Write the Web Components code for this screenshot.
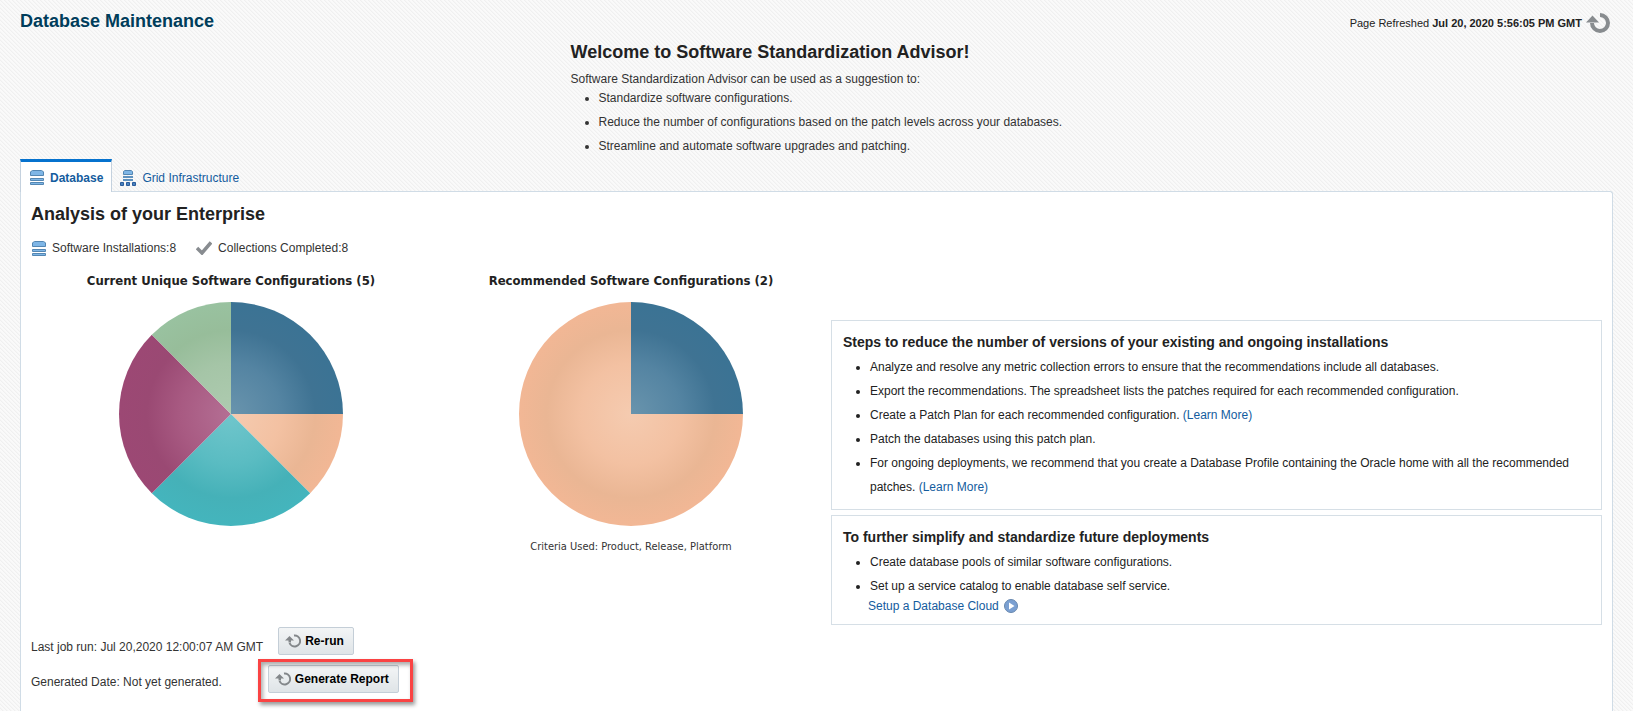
<!DOCTYPE html>
<html lang="en">
<head>
<meta charset="utf-8">
<title>Database Maintenance</title>
<style>
  body {
    margin: 0;
    font: 12px/16px "Liberation Sans", Arial, sans-serif;
    color: #333;
    background: #fafafa url("data:image/svg+xml,%3Csvg xmlns='http://www.w3.org/2000/svg' width='4' height='4' shape-rendering='crispEdges'%3E%3Cpath fill='%23f0f0f0' d='M0 0h1v1H0zM1 1h1v1H1zM2 2h1v1H2zM3 3h1v1H3z'/%3E%3Cpath fill='%23f6f6f6' d='M1 0h1v1H1zM2 1h1v1H2zM3 2h1v1H3zM0 3h1v1H0z'/%3E%3C/svg%3E");
  }
</style>
</head>
<body>
<maintenance-page></maintenance-page>

<script>
// Registers an element whose shadow root is filled from the markup that render(element) returns.
const define = (name, render) => customElements.define(name, class extends HTMLElement {
  constructor() {
    super();
    this.attachShadow({ mode: "open" });
  }
  connectedCallback() {
    const t = document.createElement("template");
    t.innerHTML = render(this);
    this.shadowRoot.replaceChildren(t.content.cloneNode(true));
  }
});

const ICONS = {
  database: [14, 15, `
    <path d="M.5 5.500V1.800L2.500.500H11.500L13.500 1.800V5.500Z" fill="#7fb6e6" stroke="#5487b3"/>
    <path d="M.5 8.500H13.500V10.500H.5ZM.5 12.500H13.500V14.500H.5Z" fill="#7fb6e6" stroke="#5487b3"/>`],
  grid: [16, 16, `
    <path d="M3.500 4.500V1.500L4.800.500H11.200L12.500 1.500V4.500Z" fill="#7fb6e6" stroke="#5487b3"/>
    <path d="M3 7H13M3 10H13" stroke="#5f92bf" stroke-width="2"/>
    <path d="M.5 12.500H3.500V15.500H.5ZM6.500 12.500H9.500V15.500H6.500ZM12.500 12.500H15.500V15.500H12.500Z" fill="#4a82bd" stroke="#2a5c9c"/>`],
  check: [16, 14, `<path d="M1 7L6 12L15 1.500" fill="none" stroke="#888c90" stroke-width="3.500"/>`],
  refresh: [24, 20, `
    <path d="M14 2A8 8 0 1 1 6 10" fill="none" stroke="#888c8f" stroke-width="4"/>
    <path d="M0 9.500L6.500 2.500L13 9.500Z" fill="#888c8f"/>`],
  rerun: [16, 14, `
    <path d="M9 1.500A5.500 5.500 0 1 1 4.500 9" fill="none" stroke="#83878a" stroke-width="2"/>
    <path d="M0 6.500L4.500 2L9 6.500H6V8.500H3.500V6.500Z" fill="#83878a"/>`],
  play: [14, 14, `
    <circle cx="7" cy="7" r="6.500" fill="#7ba0d2" stroke="#6787ae"/>
    <path d="M5 3.500L10.500 7L5 10.500Z" fill="#fff"/>`]
};

define("ui-icon", el => {
  const [w, h, body] = ICONS[el.getAttribute("name")];
  return `<style>:host { display: inline-flex; flex: none; } svg { display: block; }</style>
    <svg width="${w}" height="${h}" viewBox="0 0 ${w} ${h}" aria-hidden="true">${body}</svg>`;
});

define("page-header", () => `
  <style>
    :host { display: flex; justify-content: space-between; padding-right: 3px; }
    h1 { margin: 0; font-size: 18px; line-height: 24px; color: #003d5b; }
    p { margin: 0; padding-top: 4px; display: flex; align-items: center; gap: 4px; font-size: 11px; line-height: 20px; color: #222; }
    button { display: flex; padding: 0; border: 0; background: none; }
  </style>
  <h1>Database Maintenance</h1>
  <p><span>Page Refreshed <b>Jul 20, 2020 5:56:05 PM GMT</b></span>
    <button aria-label="Refresh"><ui-icon name="refresh"></ui-icon></button></p>`);

define("welcome-intro", () => `
  <style>
    :host { display: block; width: 492px; }
    h2 { margin: 0; font-size: 18px; line-height: 24px; color: #222; }
    p { margin: 8px 0 0; line-height: 14px; }
    ul { margin: 0; padding: 0 0 0 28px; line-height: 24px; }
  </style>
  <h2>Welcome to Software Standardization Advisor!</h2>
  <p>Software Standardization Advisor can be used as a suggestion to:</p>
  <ul>
    <li>Standardize software configurations.</li>
    <li>Reduce the number of configurations based on the patch levels across your databases.</li>
    <li>Streamline and automate software upgrades and patching.</li>
  </ul>`);

define("tab-link", el => `
  <style>
    :host { display: block; }
    a { display: flex; align-items: center; gap: 6px; height: 27px; padding: 5px 8px 0; color: #145c9e; text-decoration: none; }
    :host([selected]) a {
      padding: 1px 8px 0 9px; height: 29px; font-weight: bold; background: #fff;
      border: 1px solid #c4d1de; border-top: 3px solid #0572ce; border-bottom: 0;
    }
  </style>
  <a href="#"><ui-icon name="${el.getAttribute("icon")}"></ui-icon><slot></slot></a>`);

define("stat-item", el => `
  <style>:host { display: flex; align-items: center; gap: 6px; }</style>
  <ui-icon name="${el.getAttribute("icon")}"></ui-icon><span><slot></slot></span>`);

const PALETTE = {
  blue: ["#6994ad", "#5484a2", "#3f7393", "#3b7394"],
  peach: ["#f5cbb0", "#f3c1a2", "#eab694", "#f2b795"],
  teal: ["#70c6cc", "#5abcc2", "#45b1b8", "#44b5bd"],
  plum: ["#b46f94", "#a85a82", "#9a4973", "#9c4874"],
  green: ["#aecbb0", "#a5c5a7", "#97bd9a", "#99c2a0"]
};

define("pie-chart", el => {
  const heading = el.getAttribute("heading");
  const slices = el.getAttribute("slices").split(" ").map(s => s.split(":"));
  const total = slices.reduce((n, s) => n + Number(s[1]), 0);
  const at = f => [112 * Math.sin(f * 2 * Math.PI), -112 * Math.cos(f * 2 * Math.PI)];
  let sum = 0, defs = "", paths = "";
  for (const [color, n] of slices) {
    const a = at(sum / total), b = at((sum += Number(n)) / total);
    defs += `<radialGradient id="${color}" gradientUnits="userSpaceOnUse" cx="0" cy="0" r="112">` +
      [0, 0.45, 0.75, 1].map((o, i) => `<stop offset="${o}" stop-color="${PALETTE[color][i]}"/>`).join("") +
      `</radialGradient>`;
    paths += `<path fill="url(#${color})" d="M0 0L${a}A112 112 0 ${n / total > 0.5 ? 1 : 0} 1 ${b}Z"/>`;
  }
  return `
    <style>
      :host { display: flex; flex-direction: column; align-items: center; }
      h3 { margin: 0; font: bold 13px/18px "DejaVu Sans Condensed", "DejaVu Sans", sans-serif; color: #222; }
      svg { display: block; margin: 12px 0 13px; }
      p { margin: 0; font: 11px/16px "DejaVu Sans Condensed", "DejaVu Sans", sans-serif; }
    </style>
    <h3>${heading}</h3>
    <svg width="224" height="224" viewBox="-112 -112 224 224" role="img" aria-label="${heading}"><defs>${defs}</defs>${paths}</svg>
    <p><slot></slot></p>`;
});

define("advice-card", el => `
  <style>
    :host { display: block; border: 1px solid #d6dfe6; padding: 10px 11px; color: #222; }
    h3 { margin: 0 0 2px; font-size: 14px; line-height: 22px; }
  </style>
  <h3>${el.getAttribute("heading")}</h3><slot></slot>`);

define("job-button", () => `
  <style>
    :host { display: block; position: relative; }
    button {
      display: flex; align-items: center; gap: 4px; height: 28px; padding: 0 9px 0 6px;
      border: 1px solid #c4ced7; border-radius: 2px; background: linear-gradient(#f3f5f6, #dfe4e7);
      font: bold 12px/16px "Liberation Sans", Arial, sans-serif; color: #000;
    }
    :host([highlighted])::after {
      content: ""; position: absolute; inset: -6px -14px -9px -10px;
      border: 3px solid #fa4343; box-shadow: 2px 3px 4px #0006, inset 2px 3px 4px #0005; pointer-events: none;
    }
  </style>
  <button><ui-icon name="rerun"></ui-icon><slot></slot></button>`);

define("maintenance-page", () => `
  <style>
    :host { display: flex; flex-direction: column; min-height: 100vh; padding: 9px 20px 0; box-sizing: border-box; }
    welcome-intro { margin: 7px auto 0; }
    nav { display: flex; margin: 1px 0 -1px; position: relative; z-index: 1; }
    main { flex: 1; background: #fff; border: 1px solid #d0dce6; border-bottom: 0; border-radius: 0 3px 0 0; padding: 10px 10px 0; }
    h2 { margin: 0; font-size: 18px; line-height: 24px; color: #222; }
    .stats { display: flex; gap: 20px; margin: 14px 1px 0; }
    .overview { display: grid; grid-template-columns: 400px 400px minmax(0, 1fr); margin-top: 16px; }
    .advice { display: grid; gap: 5px; align-content: start; padding-top: 48px; }
    ul { margin: 0; padding: 0 0 0 27px; line-height: 24px; }
    a { color: #145c9e; text-decoration: none; }
    .setup { display: flex; align-items: center; gap: 5px; width: fit-content; margin-left: 25px; }
    .run { display: flex; align-items: flex-end; gap: 15px; margin-top: 2px; }
    .report { display: flex; align-items: center; gap: 46px; margin-top: 10px; }
    .report span { padding-top: 6px; }
  </style>
  <page-header></page-header>
  <welcome-intro></welcome-intro>
  <nav>
    <tab-link icon="database" selected>Database</tab-link>
    <tab-link icon="grid">Grid Infrastructure</tab-link>
  </nav>
  <main>
    <h2>Analysis of your Enterprise</h2>
    <div class="stats">
      <stat-item icon="database">Software Installations:8</stat-item>
      <stat-item icon="check">Collections Completed:8</stat-item>
    </div>
    <div class="overview">
      <pie-chart heading="Current Unique Software Configurations (5)" slices="blue:2 peach:1 teal:2 plum:2 green:1"></pie-chart>
      <pie-chart heading="Recommended Software Configurations (2)" slices="blue:2 peach:6">Criteria Used: Product, Release, Platform</pie-chart>
      <div class="advice">
        <advice-card heading="Steps to reduce the number of versions of your existing and ongoing installations">
          <ul>
            <li>Analyze and resolve any metric collection errors to ensure that the recommendations include all databases.</li>
            <li>Export the recommendations. The spreadsheet lists the patches required for each recommended configuration.</li>
            <li>Create a Patch Plan for each recommended configuration. <a href="#">(Learn More)</a></li>
            <li>Patch the databases using this patch plan.</li>
            <li>For ongoing deployments, we recommend that you create a Database Profile containing the Oracle home with all the recommended patches. <a href="#">(Learn More)</a></li>
          </ul>
        </advice-card>
        <advice-card heading="To further simplify and standardize future deployments">
          <ul>
            <li>Create database pools of similar software configurations.</li>
            <li>Set up a service catalog to enable database self service.</li>
          </ul>
          <a class="setup" href="#">Setup a Database Cloud <ui-icon name="play"></ui-icon></a>
        </advice-card>
      </div>
    </div>
    <div class="run"><span>Last job run: Jul 20,2020 12:00:07 AM GMT</span><job-button>Re-run</job-button></div>
    <div class="report"><span>Generated Date: Not yet generated.</span><job-button highlighted>Generate Report</job-button></div>
  </main>`);
</script>
</body>
</html>
